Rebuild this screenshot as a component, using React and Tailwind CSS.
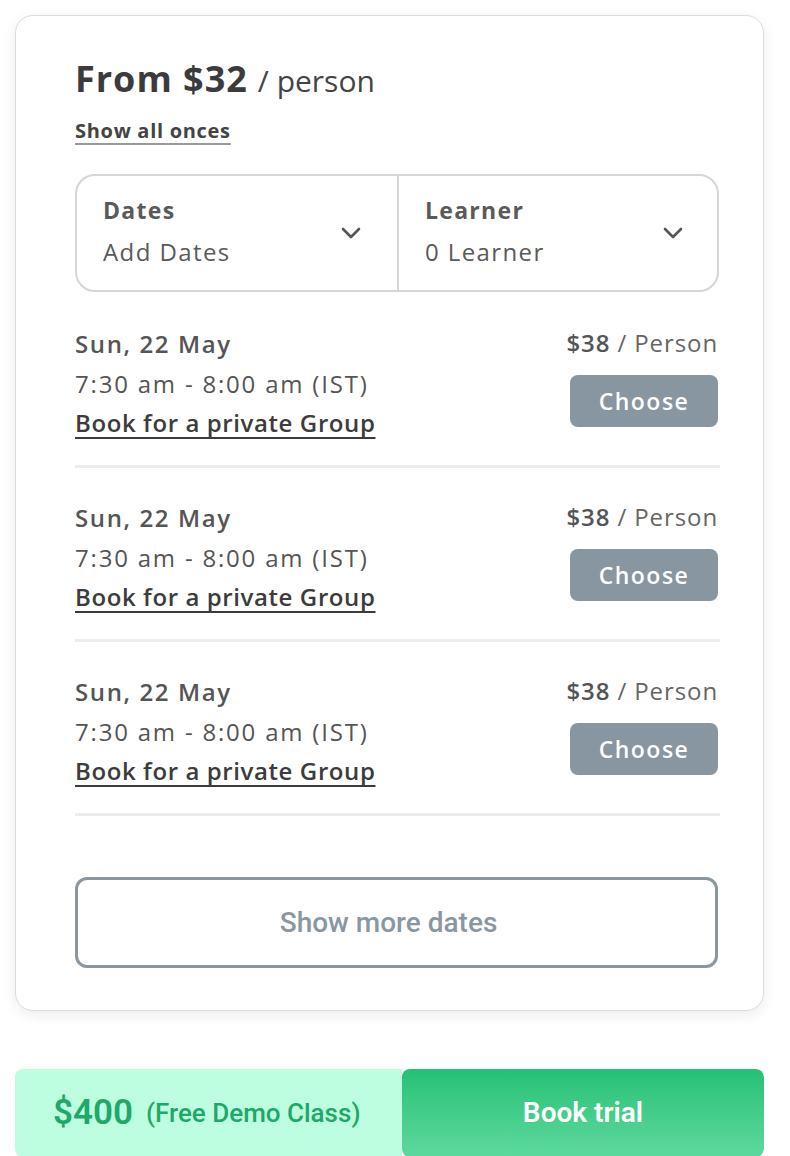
import React from 'react';

const slots = [
  { date: 'Sun, 22 May', time: '7:30 am - 8:00 am (IST)', price: '$38' },
  { date: 'Sun, 22 May', time: '7:30 am - 8:00 am (IST)', price: '$38' },
  { date: 'Sun, 22 May', time: '7:30 am - 8:00 am (IST)', price: '$38' },
];

function Chevron() {
  return (
    <svg width="20" height="12" viewBox="0 0 20 12" fill="none">
      <path d="M2 2l8 8 8-8" stroke="#555" strokeWidth="2.6" strokeLinecap="round" strokeLinejoin="round" />
    </svg>
  );
}

export default function App() {
  const sans = { fontFamily: '"Open Sans", "Noto Sans", sans-serif' };
  const roboto = { fontFamily: 'Roboto, "Noto Sans", sans-serif' };

  return (
    <div className="w-[790px] h-[1156px] bg-white" style={sans}>
      <div className="pt-[15px] px-[15px]">
        {/* 카드 */}
        <div className="w-[749px] h-[996px] border border-[#dcdcdc] rounded-[18px] bg-white shadow-[0_4px_14px_rgba(0,0,0,0.08)] pl-[59px] pr-[44px] pt-[41px]">
          <div className="flex items-baseline gap-[10px] text-[#3b3b3e] leading-[44px]">
            <span className="text-[36px] font-bold tracking-[1px]">From $32</span>
            <span className="text-[30px] text-[#444]">/ person</span>
          </div>
          <div className="mt-[16px] leading-[24px]">
            <span className="text-[20px] font-bold tracking-[0.7px] text-[#444] underline decoration-[#999] decoration-2 underline-offset-[5px] [text-decoration-skip-ink:none]">Show all onces</span>
          </div>

          {/* 선택 박스 */}
          <div className="mt-[30px] h-[118px] border-2 border-[#d6d6d6] rounded-[20px] flex">
            <div className="flex-1 flex items-center justify-between pl-[26px] pr-[36px] border-r-2 border-[#d6d6d6]">
              <div className="flex flex-col gap-[12px] leading-[30px] text-[#5a5a5a] -mt-[4px]">
                <span className="text-[23px] font-bold tracking-[1.3px]">Dates</span>
                <span className="text-[24px] font-medium tracking-[1.4px]">Add Dates</span>
              </div>
              <Chevron />
            </div>
            <div className="flex-1 flex items-center justify-between pl-[26px] pr-[34px]">
              <div className="flex flex-col gap-[12px] leading-[30px] text-[#5a5a5a] -mt-[4px]">
                <span className="text-[23px] font-bold tracking-[1.3px]">Learner</span>
                <span className="text-[24px] font-medium tracking-[1.4px]">0 Learner</span>
              </div>
              <Chevron />
            </div>
          </div>

          {/* 일정 목록 */}
          <div className="w-[645px] mt-[2px]">
            {slots.map((s, i) => (
              <div key={i} className="pt-[30px] border-b-[3px] border-[#ececec] pb-[23px] flex justify-between pr-[2px]">
                <div className="flex flex-col text-[#555] leading-[40px]">
                  <span className="text-[24px] font-semibold tracking-[1.6px]">{s.date}</span>
                  <span className="text-[24px] tracking-[1.8px]">{s.time}</span>
                  <span className="text-[24px] font-semibold tracking-[0.6px] text-[#3c3c3c] underline decoration-2 underline-offset-[5px] [text-decoration-skip-ink:none] leading-[38px]">Book for a private Group</span>
                </div>
                <div className="flex flex-col items-end">
                  <div className="leading-[38px] text-[24px] tracking-[0.9px] text-[#666]">
                    <span className="font-semibold text-[#555]">{s.price}</span> / Person
                  </div>
                  <button type="button" className="mt-[13px] w-[148px] h-[52px] rounded-[8px] bg-[#8796a1] text-white text-[23px] font-semibold tracking-[1.5px]">
                    Choose
                  </button>
                </div>
              </div>
            ))}
          </div>

          <button type="button" className="mt-[61px] w-[643px] h-[91px] border-[3px] border-[#8a97a1] rounded-[12px] text-[#8a97a1] text-[28px] font-medium pr-[16px]" style={roboto}>
            Show more dates
          </button>
        </div>
      </div>

      {/* 하단 바 */}
      <div className="mt-[58px] ml-[15px] w-[749px] h-[88px] flex rounded-[8px] overflow-hidden" style={roboto}>
        <div className="w-[387px] bg-[#bdfde0] flex items-center pl-[38px] gap-[13px] text-[#1ea869]">
          <span className="text-[35px] font-semibold">$400</span>
          <span className="text-[26px] font-medium">(Free Demo Class)</span>
        </div>
        <div className="flex-1 rounded-[8px] bg-gradient-to-b from-[#22c176] to-[#5cd99e] flex items-center justify-center text-white text-[28px] font-semibold">
          Book trial
        </div>
      </div>
    </div>
  );
}
